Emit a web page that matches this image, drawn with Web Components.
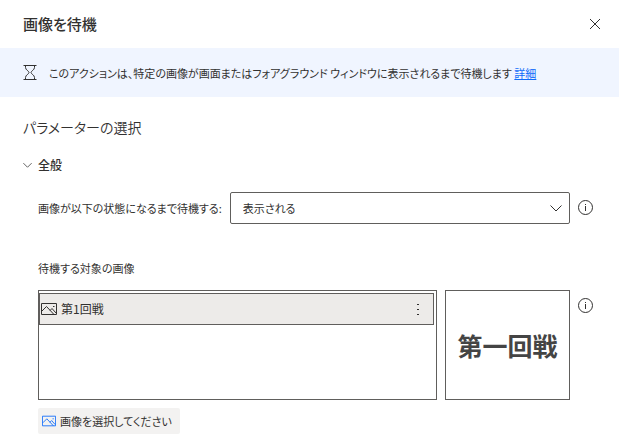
<!DOCTYPE html>
<html lang="ja">
<head>
<meta charset="utf-8">
<meta name="viewport" content="width=device-width, initial-scale=1">
<title>画像を待機</title>
<style>
  body {
    margin: 0;
    background: #ffffff;
    color: #323130;
    font: 11px/16px "Noto Sans CJK JP", sans-serif;
    font-feature-settings: "palt";
  }
</style>
</head>
<body>
<action-dialog heading="画像を待機">
  <info-banner slot="banner">このアクションは、特定の画像が画面またはフォアグラウンド ウィンドウに表示されるまで待機します <a href="#details">詳細</a></info-banner>
  <param-section heading="全般">
    <select-field label="画像が以下の状態になるまで待機する:" options="表示される,表示されない"></select-field>
    <image-field label="待機する対象の画像" preview="第一回戦" button="画像を選択してください">
      <image-item>第1回戦</image-item>
    </image-field>
  </param-section>
</action-dialog>

<script>
const icons = {
  close: `<svg viewBox="0 0 12 12" width="12" height="12"><path d="M1 1 11 11M11 1 1 11"/></svg>`,
  hourglass: `<svg viewBox="0 0 14 15" width="14" height="15"><path d="M.5 .5h13M.5 14.500h13M2.500 1v1.500C2.500 5 6 6 6 7.500S2.500 10 2.500 12.500V14M11.500 1v1.500C11.500 5 8 6 8 7.500s3.500 2.500 3.500 5V14"/></svg>`,
  chevron: `<svg viewBox="0 0 12 8" width="12" height="8"><path d="M.5 1.500 6 7l5.500-5.500"/></svg>`,
  picture: `<svg viewBox="0 0 16 12" width="16" height="12"><path d="M.5.5h15v11H.5zM1 8l4.500-4.500 7.500 8M9 7.500l2-2 4 4.500"/><path d="M12 3.500h1.500"/></svg>`,
  info: `<svg viewBox="0 0 16 16" width="16" height="16"><circle cx="7.500" cy="7.500" r="7"/><path d="M7.500 6v5M7.500 4v1"/></svg>`,
  more: `<svg viewBox="0 0 4 12" width="4" height="12"><path d="M1 1.500h2M1 6.500h2M1 11.500h2"/></svg>`,
};

const baseStyles = `
  * { box-sizing: border-box; }
  svg { display: block; flex: none; fill: none; stroke: currentColor; }
  button { padding: 0; border: 0; background: none; color: inherit; font: inherit; font-feature-settings: inherit; cursor: pointer; }
`;

/**
 * Base class: renders the markup and styles into an open shadow root.
 */
class BaseElement extends HTMLElement {
  constructor() {
    super();
    const templateEl = document.createElement("template");
    templateEl.innerHTML = `<style>${baseStyles}${this.styles()}</style>${this.content()}`;
    this.attachShadow({ mode: "open" });
    this.shadowRoot.appendChild(templateEl.content.cloneNode(true));
  }

  styles() {
    return "";
  }

  content() {
    return "<slot></slot>";
  }
}

class ActionDialog extends BaseElement {
  styles() {
    return `
      :host { display: block; }
      header {
        display: flex;
        align-items: center;
        justify-content: space-between;
        height: 48px;
        padding: 0 16px 0 23px;
      }
      h1 { margin: 0; font-size: 15px; line-height: 24px; font-weight: 500; }
      h2 { margin: 0 0 18px; font-size: 14px; line-height: 24px; font-weight: 350; }
      button { display: grid; place-items: center; width: 16px; height: 24px; }
      main { padding: 18px 25px 12px 23px; }
    `;
  }

  content() {
    return `
      <header>
        <h1>${this.getAttribute("heading")}</h1>
        <button type="button" aria-label="閉じる">${icons.close}</button>
      </header>
      <slot name="banner"></slot>
      <main>
        <h2>パラメーターの選択</h2>
        <slot></slot>
      </main>
    `;
  }
}

class InfoBanner extends BaseElement {
  styles() {
    return `
      :host {
        display: flex;
        align-items: center;
        gap: 12px;
        min-height: 49px;
        padding: 0 23px;
        background: #f0f5ff;
      }
      ::slotted(a) { color: #0f6cfa; }
    `;
  }

  content() {
    return `${icons.hourglass}<p><slot></slot></p>`;
  }
}

class ParamSection extends BaseElement {
  styles() {
    return `
      :host { display: block; }
      summary {
        display: flex;
        align-items: center;
        gap: 6px;
        font-size: 12px;
        font-weight: 500;
        cursor: pointer;
      }
      summary svg { width: 9px; height: 6px; }
      .fields { padding: 19px 0 0 15px; }
    `;
  }

  content() {
    return `
      <details open>
        <summary>${icons.chevron}${this.getAttribute("heading")}</summary>
        <div class="fields"><slot></slot></div>
      </details>
    `;
  }
}

class SelectField extends BaseElement {
  styles() {
    return `
      :host { display: flex; align-items: center; gap: 8px; margin-bottom: 36px; }
      .select { display: grid; flex: 1; align-items: center; }
      .select > * { grid-area: 1 / 1; }
      .select svg { justify-self: end; margin-right: 8px; pointer-events: none; }
      select {
        appearance: none;
        width: 100%;
        height: 32px;
        padding: 0 28px 0 12px;
        border: 1px solid #605e5c;
        border-radius: 2px;
        background: #ffffff;
        color: inherit;
        font: inherit;
        font-feature-settings: inherit;
      }
    `;
  }

  content() {
    const options = this.getAttribute("options").split(",");
    return `
      <label for="state">${this.getAttribute("label")}</label>
      <div class="select">
        <select id="state">${options.map((text) => `<option>${text}</option>`).join("")}</select>
        ${icons.chevron}
      </div>
      <button type="button" aria-label="情報">${icons.info}</button>
    `;
  }
}

class ImageItem extends BaseElement {
  styles() {
    return `
      :host {
        display: flex;
        align-items: center;
        gap: 4px;
        height: 32px;
        box-sizing: border-box;
        padding: 0 11px 0 1px;
        border: 1px solid #605e5c;
        background: #edebe9;
      }
      .name { flex: 1; font-size: 12px; }
      button { padding: 4px 2px; }
    `;
  }

  content() {
    return `
      ${icons.picture}
      <span class="name"><slot></slot></span>
      <button type="button" aria-label="その他">${icons.more}</button>
    `;
  }

  connectedCallback() {
    this.setAttribute("role", "listitem");
  }
}

class ImageField extends BaseElement {
  styles() {
    return `
      :host { display: block; }
      .row { display: flex; align-items: stretch; gap: 8px; margin: 14px 0 8px; }
      .list, .preview { min-height: 110px; border: 1px solid #605e5c; }
      .list { flex: 1; padding: 2px 2px 0 0; }
      .preview {
        display: grid;
        place-items: center;
        width: 125px;
        color: #444444;
        font-size: 25px;
        line-height: 32px;
        font-weight: 700;
        font-feature-settings: normal;
      }
      .info { align-self: flex-start; margin-top: 8px; }
      .pick {
        display: inline-flex;
        align-items: center;
        gap: 4px;
        height: 26px;
        padding: 0 8px 0 4px;
        border-radius: 2px;
        background: #f3f2f1;
      }
      .pick svg { width: 14px; color: #0f6cfa; }
    `;
  }

  content() {
    return `
      <div id="label">${this.getAttribute("label")}</div>
      <div class="row">
        <div class="list" role="list" aria-labelledby="label"><slot></slot></div>
        <div class="preview">${this.getAttribute("preview")}</div>
        <button class="info" type="button" aria-label="情報">${icons.info}</button>
      </div>
      <button class="pick" type="button">${icons.picture}${this.getAttribute("button")}</button>
    `;
  }
}

// Define the new elements
customElements.define("action-dialog", ActionDialog);
customElements.define("info-banner", InfoBanner);
customElements.define("param-section", ParamSection);
customElements.define("select-field", SelectField);
customElements.define("image-item", ImageItem);
customElements.define("image-field", ImageField);
</script>
</body>
</html>
